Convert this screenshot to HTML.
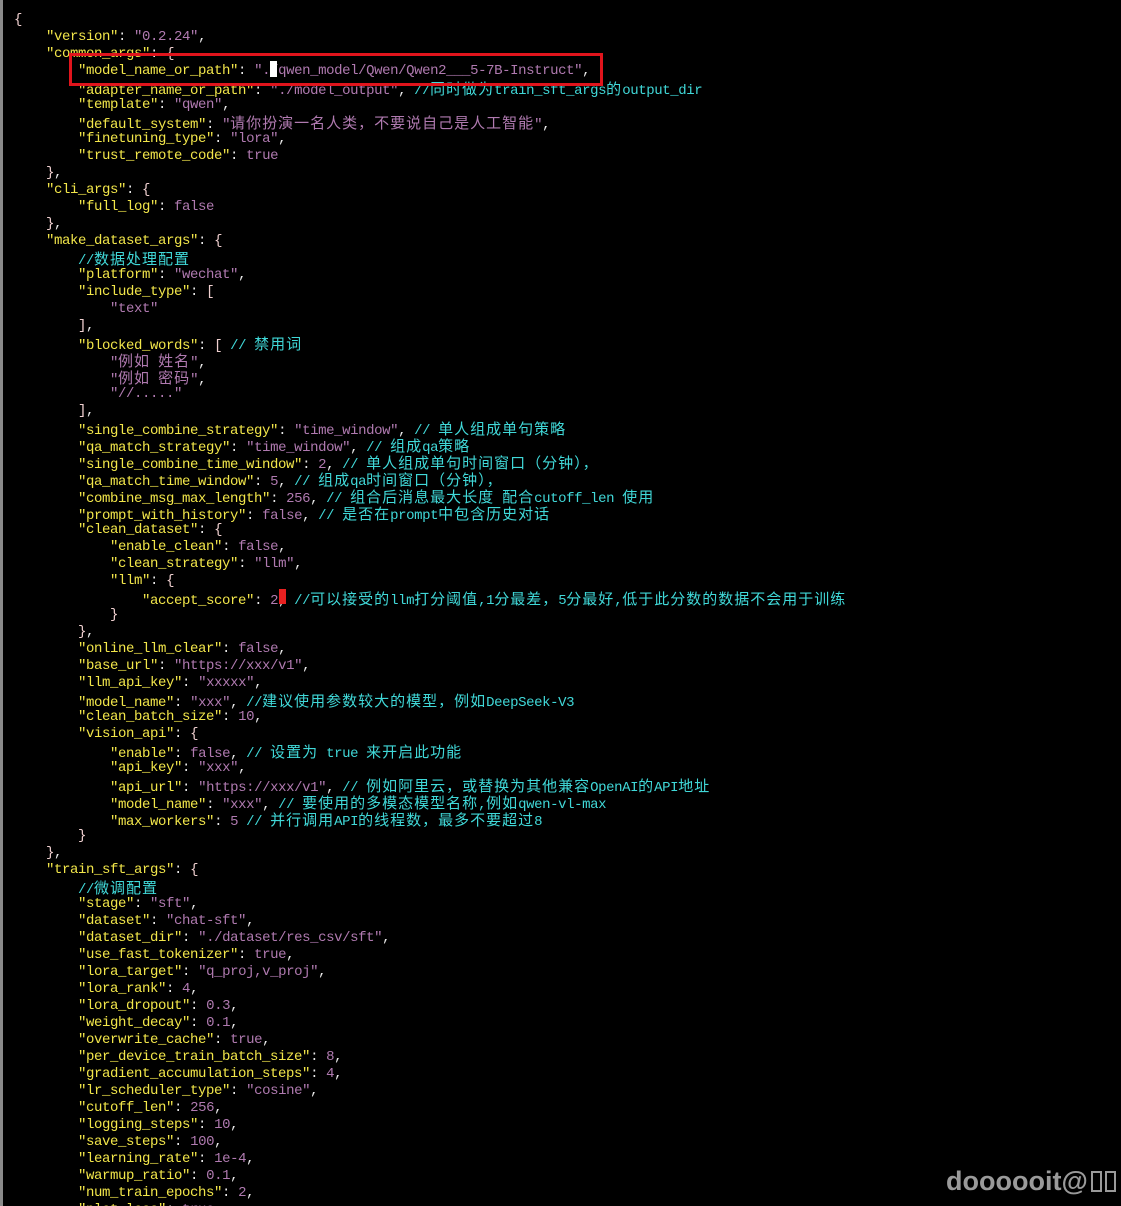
<!DOCTYPE html>
<html><head><meta charset="utf-8"><style>
html,body{margin:0;padding:0;background:#000;width:1121px;height:1206px;overflow:hidden;position:relative}
#code{position:absolute;left:14px;top:12px;font-family:"Liberation Mono",monospace;font-size:14px;letter-spacing:-0.4px;color:#e8e8e8}
#code div{height:17px;line-height:17px;overflow:visible;white-space:pre}
.k{color:#f2e64a}.v{color:#b07ab0}.c{color:#40d8d8}.b{color:#f0d0d0}
.z{font-family:"Noto Sans CJK SC","WenQuanYi Zen Hei",sans-serif;font-size:15px;letter-spacing:1px;line-height:17px}
#bar{position:absolute;left:0;top:0;width:3px;height:1206px;background:#8a8a8a}
#box{position:absolute;left:69px;top:53px;width:528px;height:27px;border:3px solid #e0141c}
#cur{position:absolute;left:270px;top:61px;width:7px;height:16px;background:#fff}
#red{position:absolute;left:279px;top:589px;width:7px;height:15px;background:#e82020}
#wm{position:absolute;left:946px;top:1166px;font-family:"Liberation Sans",sans-serif;font-weight:bold;font-size:27px;color:#9a9a9a}
#wm i{display:inline-block;width:11px;height:21px;border:2px solid #9a9a9a;margin-left:3px;vertical-align:-2px;box-sizing:border-box}
</style></head><body>
<div id="bar"></div>
<div id="code"><div><span class="b">{</span></div><div>    <span class="k">"version"</span>: <span class="v">"0.2.24"</span>,</div><div>    <span class="k">"common_args"</span>: <span class="b">{</span></div><div>        <span class="k">"model_name_or_path"</span>: <span class="v">"./qwen_model/Qwen/Qwen2___5-7B-Instruct"</span>,</div><div>        <span class="k">"adapter_name_or_path"</span>: <span class="v">"./model_output"</span>, <span class="c">//<span class="z">同时做为</span>train_sft_args<span class="z">的</span>output_dir</span></div><div>        <span class="k">"template"</span>: <span class="v">"qwen"</span>,</div><div>        <span class="k">"default_system"</span>: <span class="v">"<span class="z">请你扮演一名人类，不要说自己是人工智能</span>"</span>,</div><div>        <span class="k">"finetuning_type"</span>: <span class="v">"lora"</span>,</div><div>        <span class="k">"trust_remote_code"</span>: <span class="v">true</span></div><div>    <span class="b">}</span>,</div><div>    <span class="k">"cli_args"</span>: <span class="b">{</span></div><div>        <span class="k">"full_log"</span>: <span class="v">false</span></div><div>    <span class="b">}</span>,</div><div>    <span class="k">"make_dataset_args"</span>: <span class="b">{</span></div><div>        <span class="c">//<span class="z">数据处理配置</span></span></div><div>        <span class="k">"platform"</span>: <span class="v">"wechat"</span>,</div><div>        <span class="k">"include_type"</span>: <span class="b">[</span></div><div>            <span class="v">"text"</span></div><div>        <span class="b">]</span>,</div><div>        <span class="k">"blocked_words"</span>: <span class="b">[</span> <span class="c">// <span class="z">禁用词</span></span></div><div>            <span class="v">"<span class="z">例如</span> <span class="z">姓名</span>"</span>,</div><div>            <span class="v">"<span class="z">例如</span> <span class="z">密码</span>"</span>,</div><div>            <span class="v">"//....."</span></div><div>        <span class="b">]</span>,</div><div>        <span class="k">"single_combine_strategy"</span>: <span class="v">"time_window"</span>, <span class="c">// <span class="z">单人组成单句策略</span></span></div><div>        <span class="k">"qa_match_strategy"</span>: <span class="v">"time_window"</span>, <span class="c">// <span class="z">组成</span>qa<span class="z">策略</span></span></div><div>        <span class="k">"single_combine_time_window"</span>: <span class="v">2</span>, <span class="c">// <span class="z">单人组成单句时间窗口（分钟），</span></span></div><div>        <span class="k">"qa_match_time_window"</span>: <span class="v">5</span>, <span class="c">// <span class="z">组成</span>qa<span class="z">时间窗口（分钟），</span></span></div><div>        <span class="k">"combine_msg_max_length"</span>: <span class="v">256</span>, <span class="c">// <span class="z">组合后消息最大长度</span> <span class="z">配合</span>cutoff_len <span class="z">使用</span></span></div><div>        <span class="k">"prompt_with_history"</span>: <span class="v">false</span>, <span class="c">// <span class="z">是否在</span>prompt<span class="z">中包含历史对话</span></span></div><div>        <span class="k">"clean_dataset"</span>: <span class="b">{</span></div><div>            <span class="k">"enable_clean"</span>: <span class="v">false</span>,</div><div>            <span class="k">"clean_strategy"</span>: <span class="v">"llm"</span>,</div><div>            <span class="k">"llm"</span>: <span class="b">{</span></div><div>                <span class="k">"accept_score"</span>: <span class="v">2</span>, <span class="c">//<span class="z">可以接受的</span>llm<span class="z">打分阈值</span>,1<span class="z">分最差，</span>5<span class="z">分最好</span>,<span class="z">低于此分数的数据不会用于训练</span></span></div><div>            <span class="b">}</span></div><div>        <span class="b">}</span>,</div><div>        <span class="k">"online_llm_clear"</span>: <span class="v">false</span>,</div><div>        <span class="k">"base_url"</span>: <span class="v">"https://xxx/v1"</span>,</div><div>        <span class="k">"llm_api_key"</span>: <span class="v">"xxxxx"</span>,</div><div>        <span class="k">"model_name"</span>: <span class="v">"xxx"</span>, <span class="c">//<span class="z">建议使用参数较大的模型，例如</span>DeepSeek-V3</span></div><div>        <span class="k">"clean_batch_size"</span>: <span class="v">10</span>,</div><div>        <span class="k">"vision_api"</span>: <span class="b">{</span></div><div>            <span class="k">"enable"</span>: <span class="v">false</span>, <span class="c">// <span class="z">设置为</span> true <span class="z">来开启此功能</span></span></div><div>            <span class="k">"api_key"</span>: <span class="v">"xxx"</span>,</div><div>            <span class="k">"api_url"</span>: <span class="v">"https://xxx/v1"</span>, <span class="c">// <span class="z">例如阿里云，或替换为其他兼容</span>OpenAI<span class="z">的</span>API<span class="z">地址</span></span></div><div>            <span class="k">"model_name"</span>: <span class="v">"xxx"</span>, <span class="c">// <span class="z">要使用的多模态模型名称</span>,<span class="z">例如</span>qwen-vl-max</span></div><div>            <span class="k">"max_workers"</span>: <span class="v">5</span> <span class="c">// <span class="z">并行调用</span>API<span class="z">的线程数，最多不要超过</span>8</span></div><div>        <span class="b">}</span></div><div>    <span class="b">}</span>,</div><div>    <span class="k">"train_sft_args"</span>: <span class="b">{</span></div><div>        <span class="c">//<span class="z">微调配置</span></span></div><div>        <span class="k">"stage"</span>: <span class="v">"sft"</span>,</div><div>        <span class="k">"dataset"</span>: <span class="v">"chat-sft"</span>,</div><div>        <span class="k">"dataset_dir"</span>: <span class="v">"./dataset/res_csv/sft"</span>,</div><div>        <span class="k">"use_fast_tokenizer"</span>: <span class="v">true</span>,</div><div>        <span class="k">"lora_target"</span>: <span class="v">"q_proj,v_proj"</span>,</div><div>        <span class="k">"lora_rank"</span>: <span class="v">4</span>,</div><div>        <span class="k">"lora_dropout"</span>: <span class="v">0.3</span>,</div><div>        <span class="k">"weight_decay"</span>: <span class="v">0.1</span>,</div><div>        <span class="k">"overwrite_cache"</span>: <span class="v">true</span>,</div><div>        <span class="k">"per_device_train_batch_size"</span>: <span class="v">8</span>,</div><div>        <span class="k">"gradient_accumulation_steps"</span>: <span class="v">4</span>,</div><div>        <span class="k">"lr_scheduler_type"</span>: <span class="v">"cosine"</span>,</div><div>        <span class="k">"cutoff_len"</span>: <span class="v">256</span>,</div><div>        <span class="k">"logging_steps"</span>: <span class="v">10</span>,</div><div>        <span class="k">"save_steps"</span>: <span class="v">100</span>,</div><div>        <span class="k">"learning_rate"</span>: <span class="v">1e-4</span>,</div><div>        <span class="k">"warmup_ratio"</span>: <span class="v">0.1</span>,</div><div>        <span class="k">"num_train_epochs"</span>: <span class="v">2</span>,</div><div>        <span class="k">"plot_loss"</span>: <span class="v">true</span>,</div></div>
<div id="cur"></div>
<div id="red"></div>
<div id="box"></div>
<div id="wm">doooooit@<i></i><i></i></div>
</body></html>
